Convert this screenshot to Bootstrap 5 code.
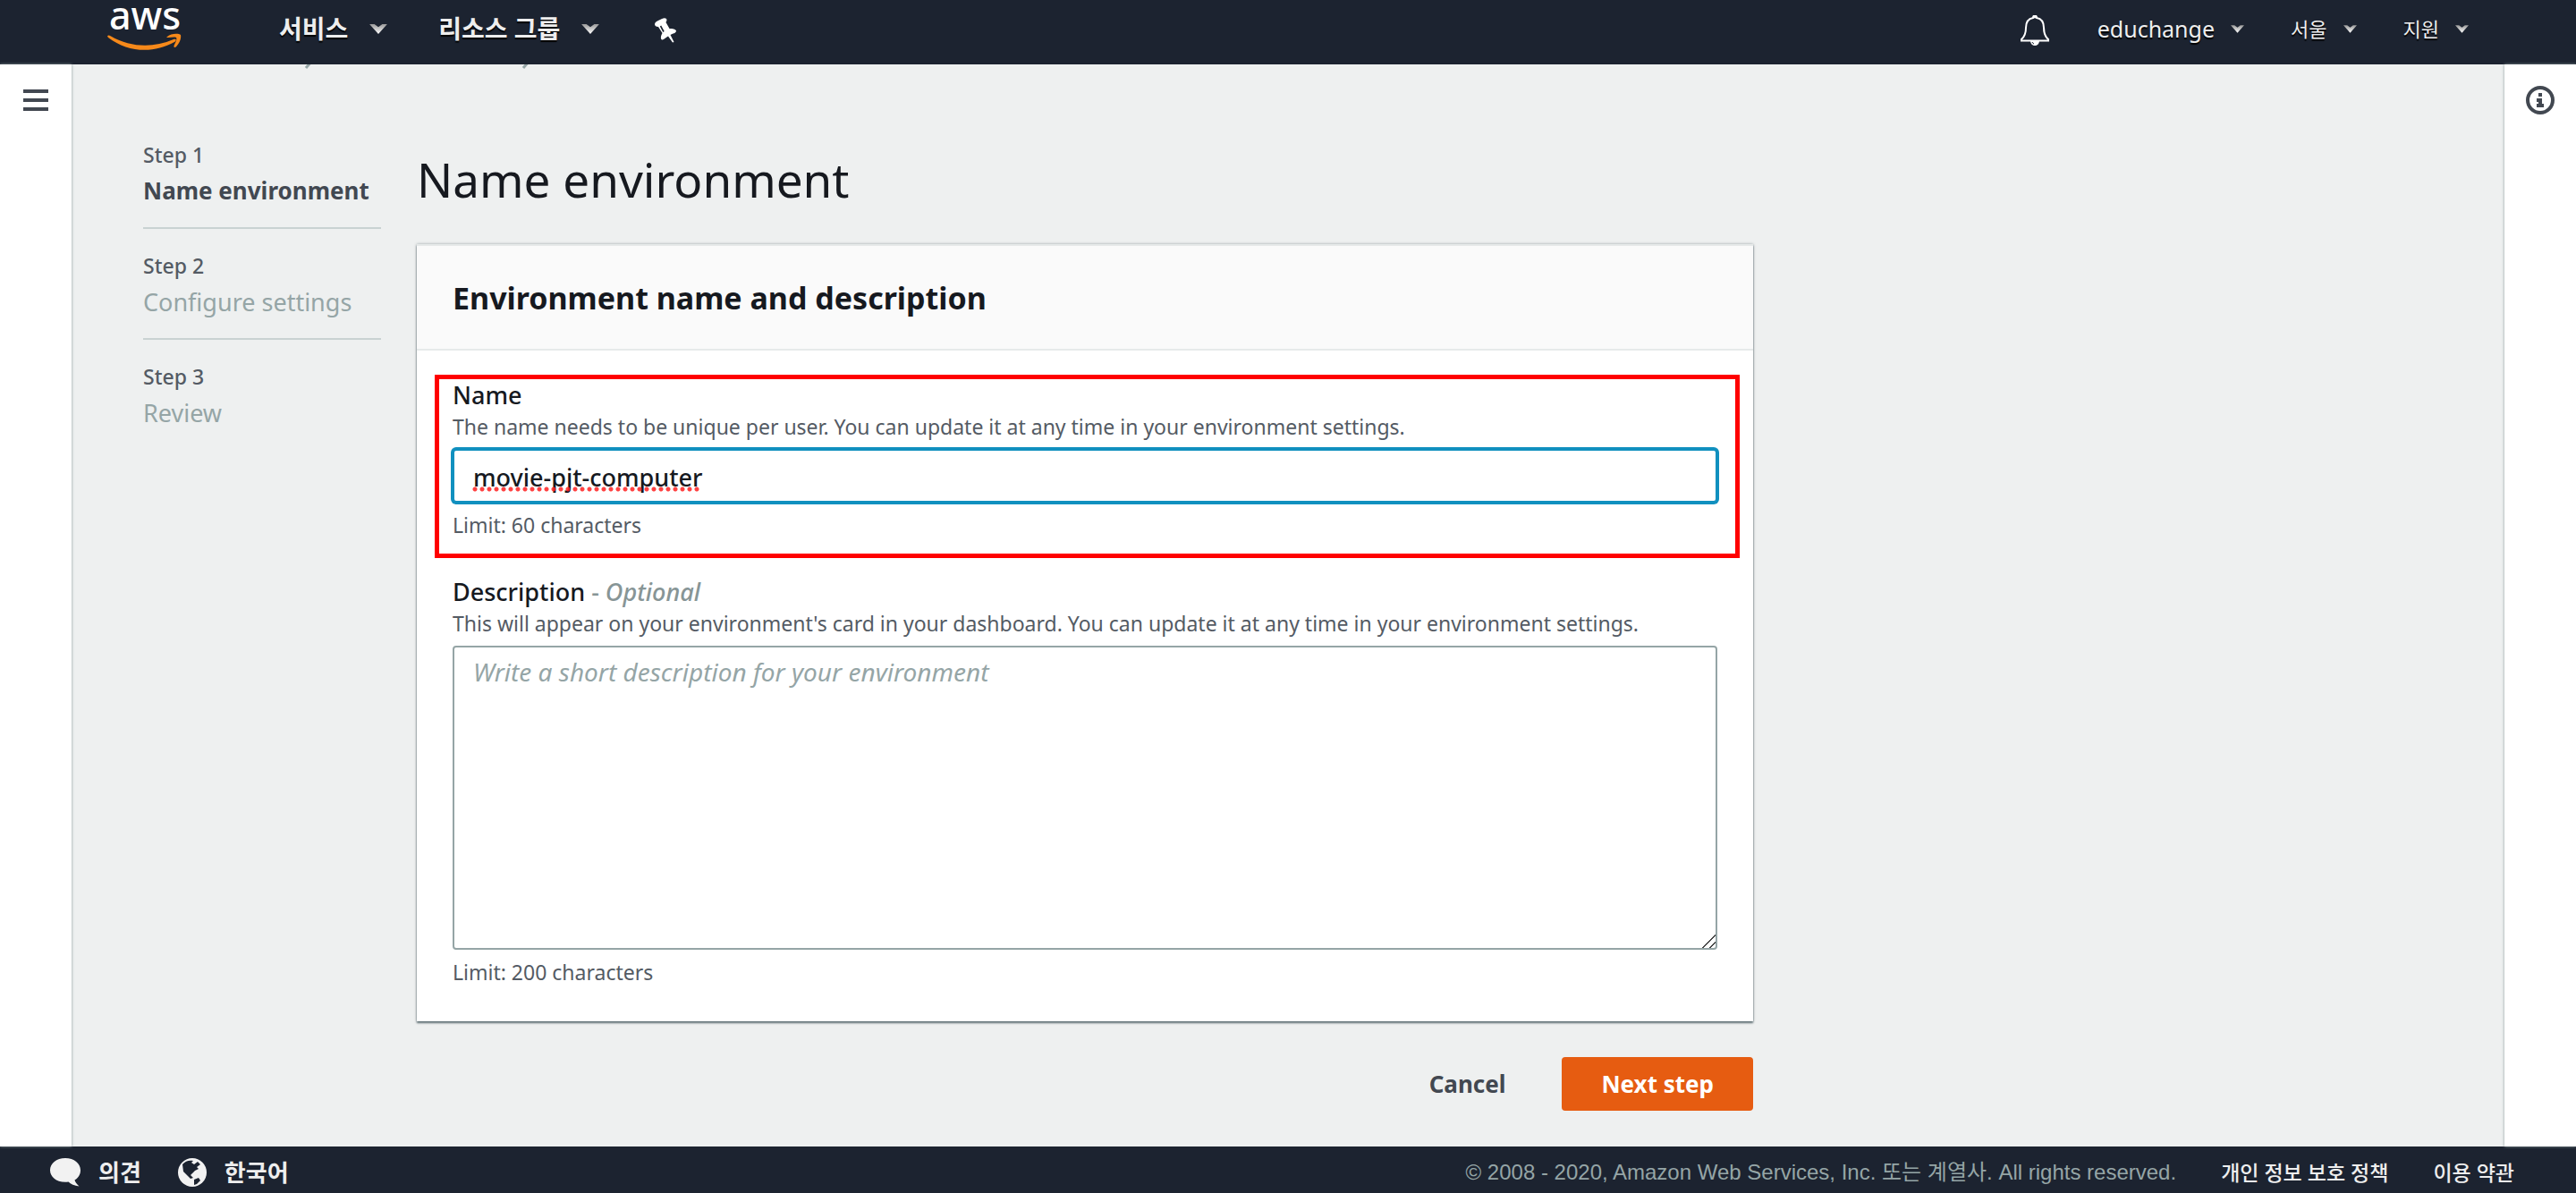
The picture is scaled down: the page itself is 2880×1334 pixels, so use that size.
<!DOCTYPE html>
<html lang="ko">
<head>
<meta charset="utf-8">
<meta name="viewport" content="width=device-width, initial-scale=1">
<title>AWS Cloud9 - Name environment</title>
<link href="https://cdn.jsdelivr.net/npm/bootstrap@5.3.0/dist/css/bootstrap.min.css" rel="stylesheet">
<style>
  :root { --navy:#1c2330; --ink:#16191f; --slate:#424851; --grey:#545b64; --mute:#95a5a6; --page:#eef0f0; }
  body { font-family:"Noto Sans","Noto Sans CJK KR",sans-serif; font-weight:500; color:var(--ink); background:var(--page); }
  a { text-decoration:none; }

  .top-bar { background:var(--navy); height:72px; padding:0 120px 8px 120px; }
  .top-bar .btn { color:#eee; text-shadow:0 2px 1px #000; line-height:40px; padding:0; border:0; }
  .menu-main { font-size:28px; font-weight:700; gap:24px; }
  .menu-side { font-size:25px; gap:18px; }
  .menu-side.ko { font-size:22px; }
  .menu-left { gap:57px; }
  .menu-left .pin { margin-left:5px; }
  .bell { margin-right:54px; }
  .brand-link { width:84px; margin-right:108px; }
  .brand-link svg { display:block; }

  .side-rail { width:80px; background:#fff; padding-top:20px; box-shadow:0 0 3px #899; z-index:1; }
  .side-rail .btn { border:0; padding:8px 0; line-height:0; }

  .crumb { font-size:27px; line-height:36px; gap:26px; margin-top:-29px; margin-bottom:76px; color:#687078; }
  .crumb a { color:#0073bb; }
  .crumb svg { margin-top:14px; }
  .work-area { padding:0 80px; overflow:hidden; }
  .steps { width:266px; }
  .steps li + li { border-top:2px solid #c9d2d2; padding-top:23px; margin-top:18px; }
  .step-no { font-size:23px; line-height:36px; color:var(--grey); }
  .step-name { font-size:27px; line-height:45px; font-weight:400; color:var(--mute); white-space:nowrap; }
  .step-name.current { font-size:26px; font-weight:700; color:var(--slate); }

  .form-col { max-width:1494px; padding-top:16px; }
  .form-col h1 { font-size:53px; line-height:60px; font-weight:400; margin-bottom:42px; }
  .panel { background:#fff; border-top:2px solid #e6e9e9; box-shadow:0 2px 2px rgba(0,28,36,.55), 0 0 3px rgba(0,28,36,.35); }
  .panel-head { background:#fafafa; border-bottom:2px solid #e6eaea; padding:35px 40px 34px; }
  .panel-head h2 { font-size:34px; line-height:46px; font-weight:700; margin:0; }
  .panel-main { padding:32px 40px 38px 40px; }
  .panel-main label { display:block; font-size:27px; line-height:36px; }
  .hint { font-size:23px; line-height:34px; font-weight:400; color:var(--grey); }
  .optional { color:#879596; }
  .field { border:2px solid var(--mute); border-radius:4px; color:var(--ink); font-weight:500; padding:0 21px; margin:8px 0; }
  input.field { height:60px; font-size:27px; padding-top:2px; }
  input.field, input.field:focus { border-color:#1190bf; box-shadow:0 0 0 2px #1190bf; }
  textarea.field { height:340px; font-size:28px; line-height:36px; font-weight:400; padding-top:9px; }
  textarea.field::-webkit-resizer { background:linear-gradient(135deg, transparent 0 48%, #444 48% 54%, transparent 54% 76%, #444 76% 82%, transparent 82%); }
  .field::placeholder { color:var(--mute); font-style:italic; opacity:1; }
  .spell { left:22px; width:256px; height:6px; bottom:12px; background:radial-gradient(circle at 3px 3px, rgba(255,32,32,.85) 2px, transparent 3px) 0 0/8px 6px repeat-x; pointer-events:none; }
  .callout-box { inset:-5px -25px -20px -20px; border:5px solid #f00; pointer-events:none; }
  .group-gap { margin-top:40px; }

  .actions { margin:40px 0; gap:20px; }
  .actions .btn { font-size:26px; font-weight:700; line-height:36px; padding:12px 43px; border:0; border-radius:4px; color:var(--slate); }
  .actions .btn-next { background:#e65c11; color:#fff; padding:12px 44px; }

  .foot-bar { background:var(--navy); height:52px; padding:5px 69px 0 55px; }
  .foot-bar .btn { color:#eee; border:0; padding:0; font-size:26px; font-weight:700; line-height:40px; gap:19px; }
  .foot-left { gap:40px; }
  .foot-right { gap:50px; font-size:23px; line-height:40px; }
  .foot-right a { color:#eee; }
  .copy { font-family:"Liberation Sans","Noto Sans CJK KR",sans-serif; font-size:24px; font-weight:400; color:var(--mute); }
</style>
<script src="https://cdn.jsdelivr.net/npm/bootstrap@5.3.0/dist/js/bootstrap.bundle.min.js"></script>
</head>
<body class="d-flex flex-column min-vh-100">

<svg width="0" height="0" class="position-absolute" aria-hidden="true">
  <linearGradient id="shade" x1="0" y1="0" x2="0" y2="1"><stop offset="0" stop-color="#999"/><stop offset="1" stop-color="#fff"/></linearGradient>
  <symbol id="caret" viewBox="0 0 18 10"><path d="M0 0h5l4 3 4-3h5L9 10z" fill="url(#shade)"/></symbol>
</svg>

<header class="top-bar d-flex align-items-center">
  <a href="#" class="brand-link" aria-label="AWS">
    <svg width="84" height="56" viewBox="0 4 84 56">
      <text x="2" y="33" font-family="Noto Sans" font-size="43" font-weight="500" fill="#fff">aws</text>
      <path d="M0 40.500C1 39 2 39.500 4 40.500C26 53 51 54 74 44C77 43 78 45 75 47C52 60 23 59 1 42Z" fill="#f6891a"/>
      <path d="M67 41C71 37 80 37 82 39C83 43 80 50 76 53C74 53 74 52 75 50C77 46 78 43 77 42C75 41 71 42 68 42C66 42 66 41.500 67 41Z" fill="#f6891a"/>
    </svg>
  </a>
  <nav class="menu-left d-flex align-items-center flex-grow-1" aria-label="main">
    <button class="btn menu-main d-flex align-items-center" type="button"><span>서비스</span><svg width="20" height="11"><use href="#caret"/></svg></button>
    <button class="btn menu-main d-flex align-items-center" type="button"><span>리소스 그룹</span><svg width="20" height="11"><use href="#caret"/></svg></button>
    <button class="btn pin" type="button" aria-label="고정">
      <svg width="24" height="28" viewBox="0 0 24 28"><path d="M0 7C0 5 2 4 5 2.500C8 1 11-1 13 1C14 3 13 4 12.500 5L16.500 12C20 11.500 24 13 24 14.500C24 17 20 17.500 17.500 19L21.500 27L20 27.500L15 20.500C12 22 10 25 8 24.500C6 23 7 19.500 8.500 17L4 10C1.500 10 0 9 0 7Z" fill="#fff"/><path d="M6.500 9L10 15.500" stroke="#1c2330" stroke-width="1.600"/></svg>
    </button>
  </nav>
  <div class="d-flex align-items-center">
    <button class="btn bell" type="button" aria-label="알림">
      <svg width="32" height="34" viewBox="0 0 32 34"><path d="M14 3C14-.5 18-.5 18 3C24 4 26 9 26 14C26 21 27.500 24 31 27V28.500H1V27C4.500 24 6 21 6 14C6 9 8 4 14 3Z" fill="none" stroke="#fff" stroke-width="2"/><circle cx="16" cy="1.800" r="1.800" fill="#fff"/><path d="M11 28.500A5 5.500 0 0 0 21 28.500Z" fill="#fff"/><path d="M13 30Q13.500 31.500 15 32" stroke="#1c2330" fill="none"/></svg>
    </button>
    <button class="btn menu-side d-flex align-items-center me-5" type="button"><span>educhange</span><svg width="15" height="9"><use href="#caret"/></svg></button>
    <button class="btn menu-side ko d-flex align-items-center mx-1" type="button"><span>서울</span><svg width="15" height="9"><use href="#caret"/></svg></button>
    <button class="btn menu-side ko d-flex align-items-center ms-5" type="button"><span>지원</span><svg width="15" height="9"><use href="#caret"/></svg></button>
  </div>
</header>

<div class="d-flex flex-grow-1">
  <aside class="side-rail flex-shrink-0 d-flex justify-content-center align-items-start">
    <button class="btn" type="button" aria-label="메뉴 열기"><svg width="28" height="24"><path d="M0 2h28M0 12h28M0 22h28" stroke="#424851" stroke-width="4"/></svg></button>
  </aside>

  <main class="work-area flex-grow-1">
    <nav class="crumb d-flex align-items-center" aria-label="breadcrumb">
      <a href="#">AWS Cloud9</a>
      <svg width="12" height="20" viewBox="0 0 12 20"><path d="M2 2l7 8-7 8" fill="none" stroke="#95a5a6" stroke-width="3"/></svg>
      <a href="#">Environments</a>
      <svg width="12" height="20" viewBox="0 0 12 20"><path d="M2 2l7 8-7 8" fill="none" stroke="#95a5a6" stroke-width="3"/></svg>
      <span>Create environment</span>
    </nav>

    <div class="d-flex">
      <ol class="steps list-unstyled flex-shrink-0 mb-0 me-3">
        <li><div class="step-no">Step 1</div><div class="step-name current">Name environment</div></li>
        <li><div class="step-no">Step 2</div><div class="step-name">Configure settings</div></li>
        <li><div class="step-no">Step 3</div><div class="step-name">Review</div></li>
      </ol>

      <form class="form-col flex-grow-1 ms-4">
        <h1>Name environment</h1>
        <section class="panel">
          <div class="panel-head"><h2>Environment name and description</h2></div>
          <div class="panel-main">
            <div class="position-relative">
              <label for="envName">Name</label>
              <div class="hint" id="nameHint">The name needs to be unique per user. You can update it at any time in your environment settings.</div>
              <div class="position-relative">
                <input id="envName" class="field w-100 d-block" type="text" value="movie-pjt-computer" maxlength="60" aria-describedby="nameHint">
                <span class="spell position-absolute"></span>
              </div>
              <div class="hint">Limit: 60 characters</div>
              <div class="callout-box position-absolute"></div>
            </div>
            <div class="group-gap">
              <label for="envDesc">Description <span class="optional">- <i>Optional</i></span></label>
              <div class="hint" id="descHint">This will appear on your environment's card in your dashboard. You can update it at any time in your environment settings.</div>
              <textarea id="envDesc" class="field w-100 d-block" maxlength="200" placeholder="Write a short description for your environment" aria-describedby="descHint"></textarea>
              <div class="hint">Limit: 200 characters</div>
            </div>
          </div>
        </section>
        <div class="actions d-flex justify-content-end">
          <button class="btn" type="button">Cancel</button>
          <button class="btn btn-next" type="button">Next step</button>
        </div>
      </form>
    </div>
  </main>

  <aside class="side-rail flex-shrink-0 d-flex justify-content-center align-items-start pt-3">
    <button class="btn" type="button" aria-label="정보"><svg width="32" height="32" viewBox="0 0 32 32"><circle cx="16" cy="16" r="14" fill="none" stroke="#424851" stroke-width="4"/><path d="M14 8h4v4h-4zM12 14h6v6h2v4h-8v-4h2v-2h-2z" fill="#424851"/></svg></button>
  </aside>
</div>

<footer class="foot-bar d-flex align-items-center justify-content-between">
  <div class="foot-left d-flex">
    <button class="btn d-flex align-items-center" type="button">
      <svg width="36" height="34" viewBox="0 0 36 34"><path d="M18 1C28 1 35 7 35 14.500C35 20 32 23.500 28.500 25.500C29 28 31 30 33.500 32.500C28 32 24 30 21.500 27.500C9 29 1 22.500 1 14.500C1 7 8 1 18 1Z" fill="#f2f2f2"/></svg><span>의견</span></button>
    <button class="btn d-flex align-items-center" type="button">
      <svg width="34" height="34" viewBox="0 0 34 34"><circle cx="17" cy="17" r="16" fill="#f2f2f2"/><path d="M6 8C9 4 14 3 18 4L16 6L19 8L23 5L26 8L22 11L24 13L20 15L17 18L15 20L18 23L15 24L11 20L7 16ZM19 25L24 23L26 26L22 30L19 31Z" fill="#1c2330"/></svg><span>한국어</span></button>
  </div>
  <div class="foot-right d-flex">
    <span class="copy">© 2008 - 2020, Amazon Web Services, Inc. 또는 계열사. All rights reserved.</span>
    <a href="#">개인 정보 보호 정책</a>
    <a href="#">이용 약관</a>
  </div>
</footer>
</body>
</html>
